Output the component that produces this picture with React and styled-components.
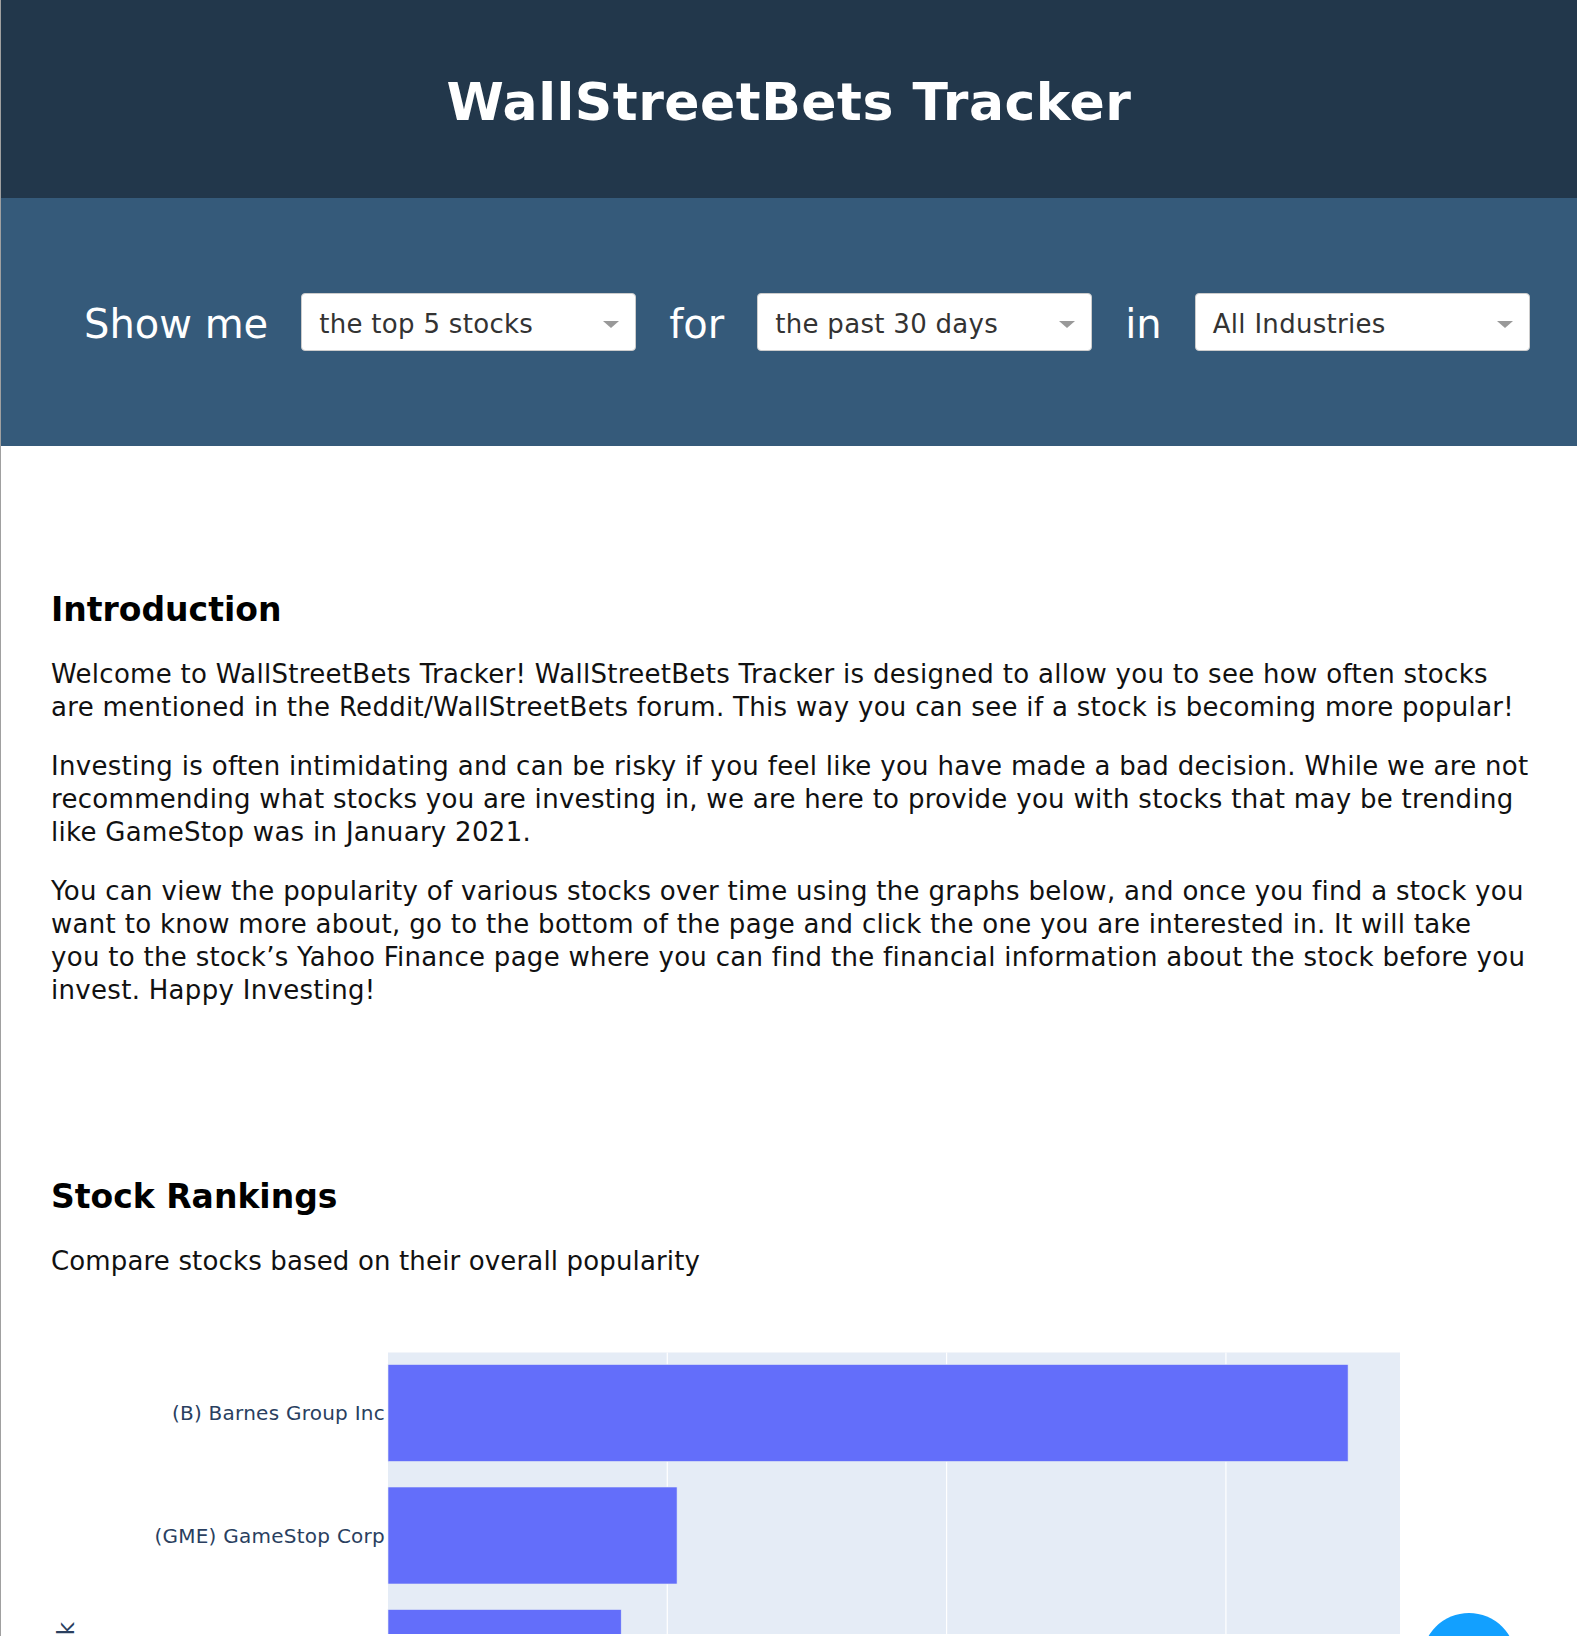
import styled, { createGlobalStyle } from "styled-components";

const GlobalStyle = createGlobalStyle`
  html, body {
    margin: 0;
    padding: 0;
    background: #ffffff;
  }
  body {
    font-family: "DejaVu Sans", Verdana, sans-serif;
    color: #111111;
  }
`;

const filters = [
  { label: "Show me", value: "the top 5 stocks" },
  { label: "for", value: "the past 30 days" },
  { label: "in", value: "All Industries" },
];

// lines kept as in the original layout
const intro = [
  [
    "Welcome to WallStreetBets Tracker! WallStreetBets Tracker is designed to allow you to see how often stocks",
    "are mentioned in the Reddit/WallStreetBets forum. This way you can see if a stock is becoming more popular!",
  ],
  [
    "Investing is often intimidating and can be risky if you feel like you have made a bad decision. While we are not",
    "recommending what stocks you are investing in, we are here to provide you with stocks that may be trending",
    "like GameStop was in January 2021.",
  ],
  [
    "You can view the popularity of various stocks over time using the graphs below, and once you find a stock you",
    "want to know more about, go to the bottom of the page and click the one you are interested in. It will take",
    "you to the stock’s Yahoo Finance page where you can find the financial information about the stock before you",
    "invest. Happy Investing!",
  ],
];

const stocks = [
  { name: "(B) Barnes Group Inc", count: 68.75 },
  { name: "(GME) GameStop Corp", count: 20.7 },
  { name: "(AMC) AMC Entertainment", count: 16.7 },
  { name: "(PLTR) Palantir Technologies", count: 14.2 },
  { name: "(TSLA) Tesla Inc", count: 11.6 },
];

// plot geometry, in px inside the chart svg
const PLOT_X = 337;
const PLOT_Y = 48.5;
const PLOT_W = 1012;
const UNIT = 279.3 / 20;
const ROW = 122.5;
const BAR_H = 97;

const Lines = ({ lines }) =>
  lines.map((l, i) => (
    <span key={i}>
      {l}
      {i < lines.length - 1 && <br />}
    </span>
  ));

const App = () => {
  return (
    <Page>
      <GlobalStyle />
      <Header>
        <Title>WallStreetBets Tracker</Title>
      </Header>

      <FilterBar>
        {filters.map((f) => (
          <FilterGroup key={f.label}>
            <FilterLabel>{f.label}</FilterLabel>
            <Dropdown>
              <DropdownText>{f.value}</DropdownText>
              <Caret />
            </Dropdown>
          </FilterGroup>
        ))}
      </FilterBar>

      <Content>
        <Section $top={144}>
          <SectionTitle>Introduction</SectionTitle>
          {intro.map((p, i) => (
            <Paragraph key={i}>
              <Lines lines={p} />
            </Paragraph>
          ))}
        </Section>

        <Section $top={170}>
          <SectionTitle>Stock Rankings</SectionTitle>
          <Paragraph $spacing={0.15}>
            Compare stocks based on their overall popularity
          </Paragraph>
          <Chart width="1477" height="330" viewBox="0 0 1477 330">
            <rect x={PLOT_X} y={PLOT_Y} width={PLOT_W} height="600" fill="#e5ecf6" />
            {[1, 2, 3].map((i) => (
              <line
                key={i}
                x1={PLOT_X + i * 279.3}
                x2={PLOT_X + i * 279.3}
                y1={PLOT_Y}
                y2={PLOT_Y + 600}
                stroke="#ffffff"
                strokeWidth="1.2"
              />
            ))}
            {stocks.map((s, i) => {
              const y = PLOT_Y + 12 + i * ROW;
              return (
                <g key={s.name}>
                  <rect
                    x={PLOT_X}
                    y={y}
                    width={s.count * UNIT}
                    height={BAR_H}
                    fill="#636efa"
                    stroke="#e5ecf6"
                    strokeWidth="0.6"
                  />
                  <BarLabel
                    x={PLOT_X - 3}
                    y={y + BAR_H / 2}
                    textAnchor="end"
                    dominantBaseline="central"
                  >
                    {s.name}
                  </BarLabel>
                </g>
              );
            })}
            <AxisTitle transform="translate(23 318) rotate(-90)" textAnchor="end">
              Stock
            </AxisTitle>
          </Chart>
        </Section>
      </Content>

      <ChatBubble />
    </Page>
  );
};

const Page = styled.div`
  border-left: 1px solid #a0a0a0;
  min-height: 100vh;
  box-sizing: border-box;
  overflow: hidden;
`;

const Header = styled.header`
  background: #22374b;
  height: 198px;
  box-sizing: border-box;
  padding-top: 72px;
  text-align: center;
`;

const Title = styled.h1`
  margin: 0;
  font-size: 52px;
  font-weight: bold;
  letter-spacing: 0.5px;
  color: #ffffff;
  line-height: normal;
`;

const FilterBar = styled.div`
  background: #355a7a;
  height: 248px;
  box-sizing: border-box;
  display: flex;
  align-items: center;
  gap: 33px;
  padding-left: 83px;
`;

const FilterGroup = styled.div`
  display: flex;
  align-items: center;
  gap: 33px;
`;

const FilterLabel = styled.span`
  font-size: 40px;
  color: #ffffff;
  padding-top: 4px;
  white-space: nowrap;
`;

const Dropdown = styled.div`
  width: 335px;
  height: 58px;
  box-sizing: border-box;
  background: #ffffff;
  border: 1px solid #cccccc;
  border-radius: 4px;
  display: flex;
  align-items: center;
  justify-content: space-between;
  padding: 0 16px 0 17px;
`;

const DropdownText = styled.span`
  font-size: 26px;
  letter-spacing: 0.3px;
  color: #333333;
  padding-top: 4px;
  white-space: nowrap;
`;

const Caret = styled.span`
  width: 0;
  height: 0;
  border-left: 8.5px solid transparent;
  border-right: 8.5px solid transparent;
  border-top: 7px solid #999999;
  margin-top: 4px;
`;

const Content = styled.main`
  padding: 0 20px 0 50px;
`;

const Section = styled.section`
  padding-top: ${(p) => p.$top}px;
`;

const SectionTitle = styled.h2`
  margin: 0 0 29px;
  font-size: 33px;
  font-weight: bold;
  line-height: normal;
  color: #000000;
`;

const Paragraph = styled.p`
  margin: 0 0 26px;
  font-size: 26px;
  line-height: 33px;
  letter-spacing: ${(p) => p.$spacing ?? 0.3}px;
  white-space: nowrap;
  color: #111111;
  &:last-child {
    margin-bottom: 0;
  }
`;

const Chart = styled.svg`
  display: block;
  font-family: "DejaVu Sans", Verdana, sans-serif;
`;

const BarLabel = styled.text`
  font-size: 20px;
  letter-spacing: 0.25px;
  fill: #2a3f5f;
`;

const AxisTitle = styled.text`
  font-size: 23px;
  fill: #2a3f5f;
`;

const ChatBubble = styled.div`
  position: fixed;
  right: 61px;
  bottom: -71px;
  width: 94px;
  height: 94px;
  border-radius: 50%;
  background: #12a0ff;
`;

export default App;
